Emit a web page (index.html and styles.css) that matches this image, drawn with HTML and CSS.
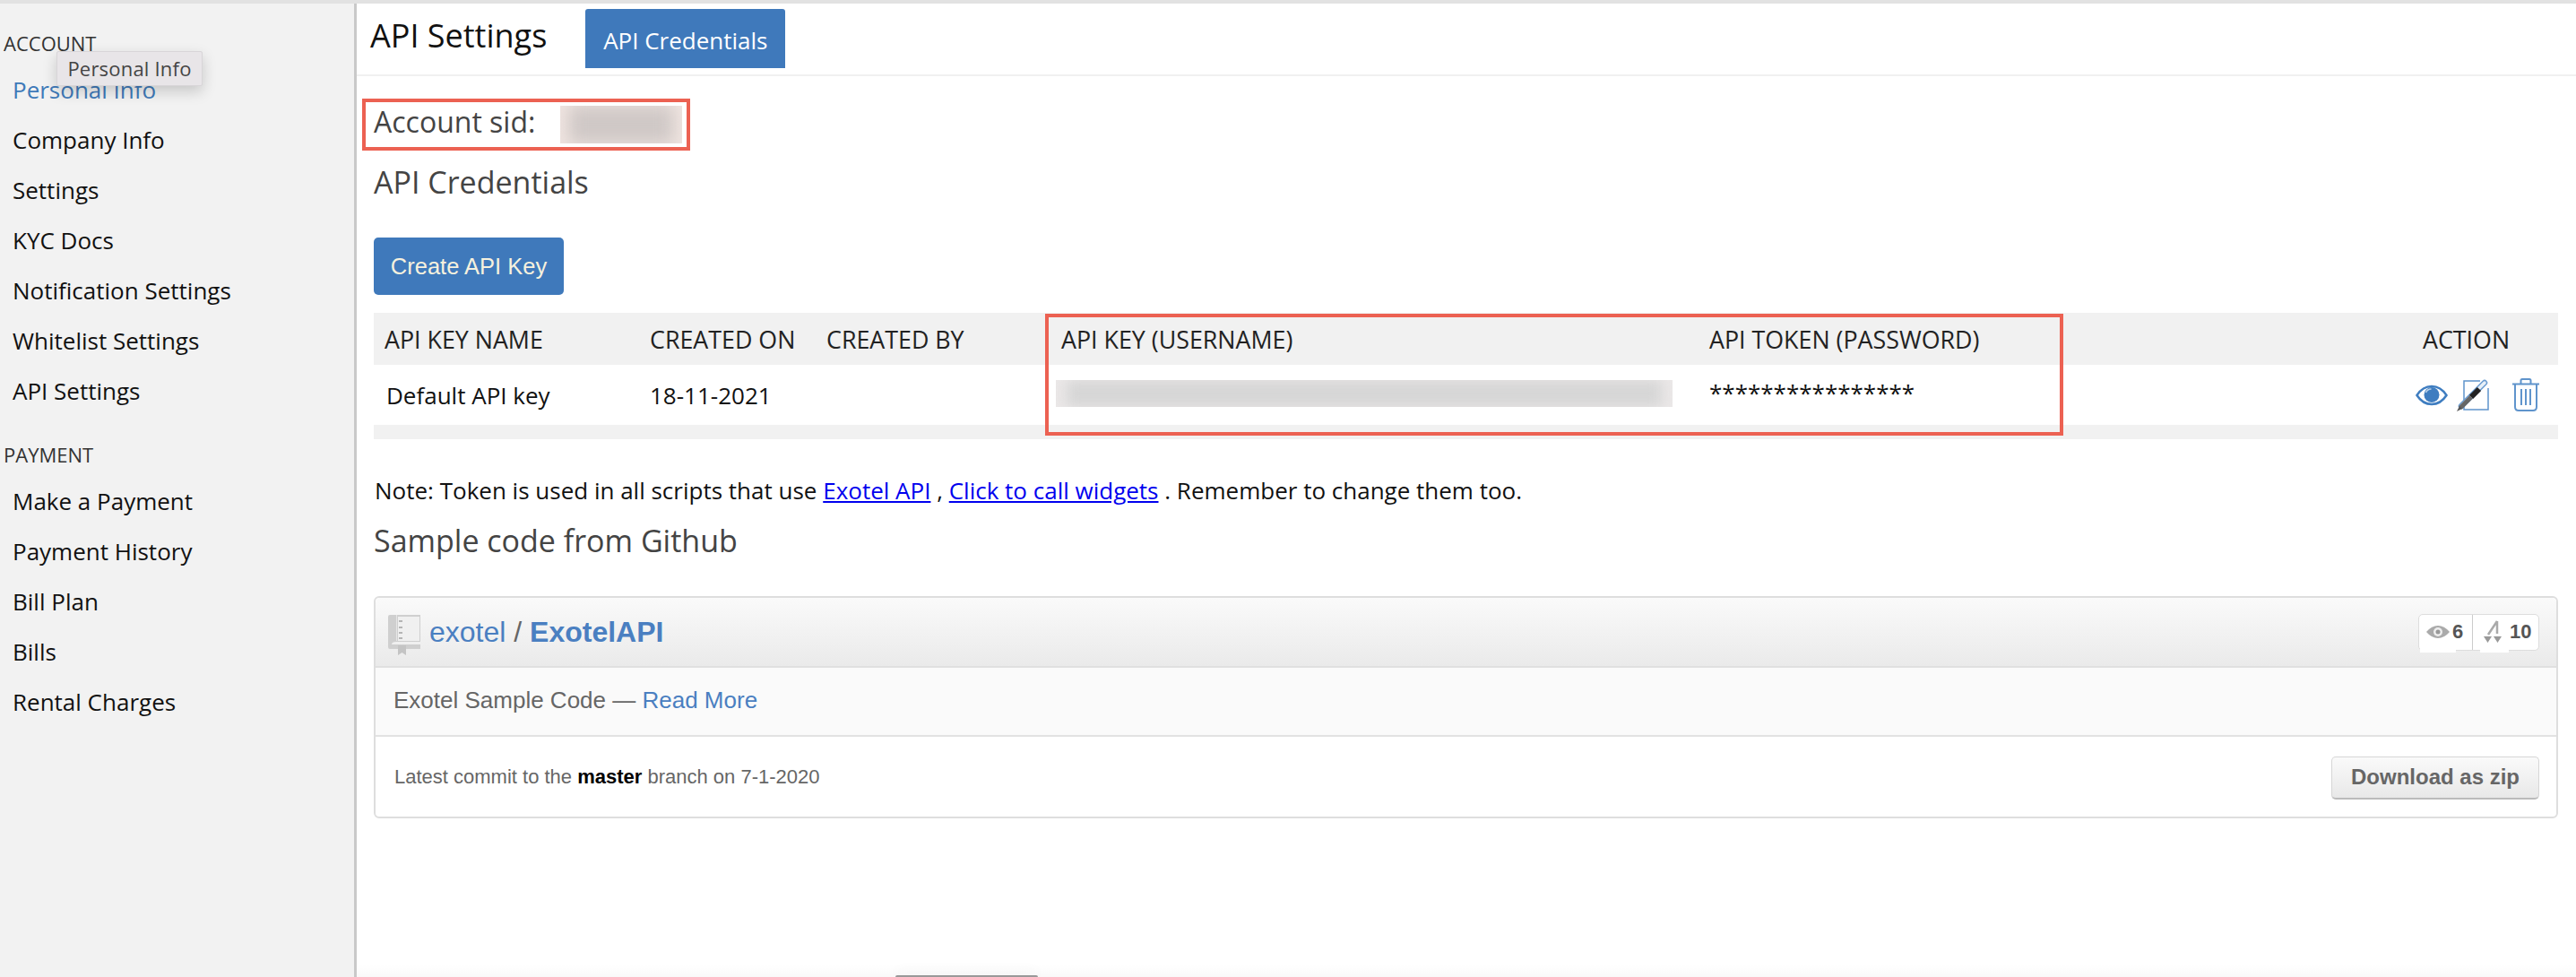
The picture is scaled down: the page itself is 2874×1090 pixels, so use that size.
FILE: index.html
```html
<!DOCTYPE html>
<html lang="en">
<head>
  <meta charset="UTF-8">
  <title>API Settings</title>
  <link rel="stylesheet" href="styles.css">
</head>
<body>
  <div class="page">
    <aside class="sidebar">
      <div class="nav-label first">ACCOUNT</div>
      <a class="nav-item active">Personal Info</a>
      <a class="nav-item">Company Info</a>
      <a class="nav-item">Settings</a>
      <a class="nav-item">KYC Docs</a>
      <a class="nav-item">Notification Settings</a>
      <a class="nav-item">Whitelist Settings</a>
      <a class="nav-item">API Settings</a>
      <div class="nav-label">PAYMENT</div>
      <a class="nav-item">Make a Payment</a>
      <a class="nav-item">Payment History</a>
      <a class="nav-item">Bill Plan</a>
      <a class="nav-item">Bills</a>
      <a class="nav-item">Rental Charges</a>
      <div class="tooltip">Personal Info</div>
    </aside>

    <main class="main">
      <header class="top">
        <h1 class="title">API Settings</h1>
        <a class="tab">API Credentials</a>
      </header>

      <div class="content">
        <div class="sid-box">
          <span class="sid-label">Account sid:</span>
          <span class="blur sid-blur"><i></i></span>
        </div>
        <h2 class="heading cred-heading">API Credentials</h2>
        <button class="create-btn">Create API Key</button>

        <div class="table-wrap">
          <table class="keys">
            <colgroup>
              <col class="c-name"><col class="c-on"><col class="c-by"><col class="c-key"><col class="c-token"><col class="c-action">
            </colgroup>
            <thead>
              <tr>
                <th>API KEY NAME</th>
                <th>CREATED ON</th>
                <th>CREATED BY</th>
                <th>API KEY (USERNAME)</th>
                <th>API TOKEN (PASSWORD)</th>
                <th>ACTION</th>
              </tr>
            </thead>
            <tbody>
              <tr>
                <td class="name-cell">Default API key</td>
                <td>18-11-2021</td>
                <td></td>
                <td class="key-cell"><span class="blur key-blur"><i></i></span></td>
                <td class="token-cell">****************</td>
                <td class="action-cell">
                  <svg class="ic-eye" width="36" height="24" viewBox="0 0 36 24">
                    <path d="M1.5 12C6 5 11.500 2 18 2s12 3 16.500 10C30 19 24.500 22 18 22S6 19 1.500 12z" fill="none" stroke="#3f7dc0" stroke-width="2.500"/>
                    <circle cx="18" cy="11.500" r="8.500" fill="#3f7dc0"/>
                    <path d="M11.500 9c1-2.500 3.500-4 6-4" fill="none" stroke="#bcd3ea" stroke-width="1.500"/>
                  </svg>
                  <svg class="ic-edit" width="36" height="38" viewBox="0 0 36 38">
                    <path d="M26 3H8v32h27V11" fill="none" stroke="#5f94cc" stroke-width="1.500"/>
                    <path d="M5 31 31 5" stroke="#6a9bd0" stroke-width="6.500" stroke-linecap="round"/>
                    <path d="M5 31 31 5" stroke="#e8f0f8" stroke-width="3.500" stroke-linecap="round"/>
                    <path d="M25 12 16 21" stroke="#222" stroke-width="6"/>
                    <path d="M16 21 4 33" stroke="#666" stroke-width="5"/>
                    <path d="M3 31 0 37l6-3z" fill="#555"/>
                  </svg>
                  <svg class="ic-trash" width="32" height="37" viewBox="0 0 32 37">
                    <path d="M1 6.500h30M10.500 6V2.500q0-1.500 1.500-1.500h8q1.500 0 1.500 1.500V6M4 7v25q0 4 4 4h16q4 0 4-4V7M11 12v18M16 12v18M21 12v18" fill="none" stroke="#5f94cc" stroke-width="2"/>
                  </svg>
                </td>
              </tr>
            </tbody>
          </table>
          <div class="table-foot"></div>
          <div class="mark-box"></div>
        </div>

        <p class="note">Note: Token is used in all scripts that use <a href="#">Exotel API</a> , <a href="#">Click to call widgets</a> . Remember to change them too.</p>
        <h2 class="heading sample-heading">Sample code from Github</h2>

        <section class="repo">
          <div class="repo-head">
            <svg class="book" width="36" height="45" viewBox="0 0 36 45">
              <path d="M0 2q0-2 2-2h34v30H9q-5 0-5 3h32v5H2q-2 0-2-2z" fill="#cfcfcf"/>
              <path d="M9 0h1v29H9z" fill="#e6e6e6"/>
              <path d="M11 2h24v27H11z" fill="#f0f0f0"/>
              <path d="M12 6h4v2h-4zM12 13h4v2h-4zM12 19h4v2h-4zM12 25h4v2h-4z" fill="#b5b5b5"/>
              <path d="M11 34h9v11l-4.500-3-4.500 3z" fill="#c4c4c4"/>
            </svg>
            <div class="repo-name"><a>exotel</a> <span>/</span> <a class="strong">ExotelAPI</a></div>
            <div class="stats">
              <div class="stat watch">
                <svg width="28" height="16" viewBox="0 0 28 16">
                  <path d="M1 8q6-7 13-7t13 7q-6 7-13 7T1 8z" fill="#aaa"/>
                  <circle cx="14" cy="8" r="5" fill="#eee"/>
                  <circle cx="14" cy="8" r="2.500" fill="#999"/>
                </svg>
                <b>6</b>
              </div>
              <div class="stat fork">
                <svg width="20" height="26" viewBox="0 0 20 26">
                  <path d="M15 1 5 16M15 1v14" fill="none" stroke="#aaa" stroke-width="2.500"/>
                  <path d="M0 18h9l-4.500 7zM11 18h9l-4.500 7z" fill="#999"/>
                </svg>
                <b>10</b>
              </div>
              <span class="patch patch-a"></span>
              <span class="patch patch-b"></span>
            </div>
          </div>
          <div class="repo-desc">Exotel Sample Code — <a>Read More</a></div>
          <div class="repo-foot">
            <span>Latest commit to the <b>master</b> branch on 7-1-2020</span>
            <button class="zip-btn">Download as zip</button>
          </div>
        </section>
      </div>
    </main>
  </div>
  <div class="bottom-fade"></div>
  <div class="dock-edge"></div>
</body>
</html>
```

FILE: styles.css
```css
html,
body {
  margin: 0;
  height: 1090px;
  overflow: hidden;
  background-color: #ffffff;
  font-family: "Open Sans", sans-serif;
  color: #111;
}
body {
  position: relative;
  border-top: 4px solid #e2e2e2;
  box-sizing: border-box;
}
.page {
  display: flex;
  height: 100%;
}

/* sidebar */
.sidebar {
  position: relative;
  flex: 0 0 395px;
  background-color: #f2f2f2;
  border-right: 3px solid #c9c9c9;
  padding-top: 22px;
}
.nav-label {
  height: 44px;
  line-height: 44px;
  margin: 21px 0 2px 4px;
  font-size: 22px;
  color: #333;
}
.nav-label.first {
  margin-bottom: 2px;
  margin-top: 0;
}
.nav-item {
  display: block;
  height: 56px;
  line-height: 56px;
  padding-left: 14px;
  font-size: 26px;
  color: #111;
}
.nav-item.active {
  color: #3f7ab9;
}
.tooltip {
  position: absolute;
  left: 63px;
  top: 53px;
  width: 163px;
  height: 39px;
  line-height: 36px;
  box-sizing: border-box;
  text-align: center;
  font-size: 22px;
  letter-spacing: 0.2px;
  color: #444;
  background-color: #e8e5e8;
  border: 1px solid #d8d5d8;
  border-radius: 2px;
  box-shadow: 0 6px 16px rgba(0, 0, 0, 0.18);
}

/* top bar */
.main {
  flex: 1;
  min-width: 0;
}
.top {
  display: flex;
  align-items: flex-start;
  height: 79px;
  border-bottom: 2px solid #f0f0f0;
  padding-left: 15px;
}
.title {
  margin: 9px 0 0;
  font-size: 36px;
  line-height: 54px;
  font-weight: 400;
  color: #111;
}
.tab {
  margin: 6px 0 0 43px;
  width: 223px;
  height: 66px;
  line-height: 70px;
  text-align: center;
  font-size: 26px;
  color: #fff;
  background-color: #3f79bb;
  border-radius: 3px 3px 0 0;
}

/* content */
.content {
  padding: 25px 20px 0 19px;
}
.sid-box {
  display: flex;
  align-items: center;
  width: 366px;
  height: 58px;
  box-sizing: border-box;
  margin-left: -13px;
  padding-left: 9px;
  border: 4px solid #ec6152;
}
.sid-label {
  width: 208px;
  margin-bottom: 6px;
  font-size: 32px;
  line-height: 44px;
  color: #444;
}
.blur {
  display: block;
  overflow: hidden;
  background-color: #efe4e0;
}
.blur i {
  display: block;
  height: 100%;
  background-color: #cfc8c6;
  filter: blur(9px);
}
.sid-blur {
  width: 136px;
  height: 42px;
}
.sid-blur i {
  margin: 0 10px;
}
.heading {
  margin: 0;
  font-weight: 400;
  font-size: 34px;
  line-height: 44px;
  color: #444;
}
.cred-heading {
  margin-top: 13px;
}
.create-btn {
  display: block;
  margin-top: 40px;
  width: 212px;
  height: 64px;
  padding: 0;
  border: 0;
  border-radius: 5px;
  background-color: #3f79bb;
  color: #f6f1de;
  font-family: "Liberation Sans", sans-serif;
  font-size: 25.500px;
}

/* table */
.table-wrap {
  position: relative;
  margin-top: 20px;
  width: 2437px;
}
.keys {
  width: 100%;
  table-layout: fixed;
  border-collapse: collapse;
  font-size: 26px;
}
.c-name { width: 296px; }
.c-on { width: 197px; }
.c-by { width: 262px; }
.c-key { width: 723px; }
.c-token { width: 796px; }
.c-action { width: 163px; }
.keys th {
  height: 58px;
  padding: 0 0 0 12px;
  text-align: left;
  font-size: 26.800px;
  font-weight: 400;
  color: #222;
  background-color: #f1f1f1;
}
.keys td {
  height: 67px;
  padding: 0 0 0 12px;
  color: #111;
  background-color: #fff;
}
.keys .name-cell {
  padding-left: 14px;
}
.keys .key-cell {
  padding-left: 6px;
}
.keys .token-cell {
  height: 62px;
  padding-bottom: 5px;
}
.key-blur {
  width: 688px;
  height: 30px;
  background-color: #ebe8e8;
  margin-bottom: 3px;
}
.key-blur i {
  margin: 0 12px;
  background-color: #d6d6d6;
  filter: blur(7px);
}
.keys .action-cell {
  white-space: nowrap;
  font-size: 0;
}
.action-cell svg {
  vertical-align: middle;
}
.ic-eye { margin-left: -8px; }
.ic-edit { margin-left: 10px; }
.ic-trash { margin-left: 25px; }
.table-foot {
  height: 16px;
  background-color: #f1f1f1;
}
.mark-box {
  position: absolute;
  left: 749px;
  top: 1px;
  width: 1136px;
  height: 136px;
  box-sizing: border-box;
  border: 4px solid #ec6152;
}
.note {
  margin: 40px 0 0 1px;
  font-size: 26px;
  line-height: 34px;
  color: #111;
}
.note a {
  color: #0000ee;
  text-decoration: underline;
}
.sample-heading {
  margin-top: 17px;
}

/* github widget */
.repo {
  margin-top: 40px;
  width: 2437px;
  box-sizing: border-box;
  border: 2px solid #dedede;
  border-radius: 6px;
  font-family: "Liberation Sans", sans-serif;
  color: #666;
}
.repo-head {
  display: flex;
  align-items: center;
  height: 76px;
  padding: 0 19px 0 14px;
  background: linear-gradient(#fafafa, #eaeaea);
  border-bottom: 2px solid #e0e0e0;
  border-radius: 5px 5px 0 0;
}
.book {
  margin-top: 6px;
}
.repo-name {
  margin-left: 10px;
  font-size: 32px;
  color: #666;
}
.repo-name a,
.repo-desc a {
  color: #4a7fc1;
}
.repo-name .strong {
  font-weight: 700;
}
.stats {
  position: relative;
  display: flex;
  margin-left: auto;
  height: 41px;
  box-sizing: border-box;
  background-color: #fff;
  border: 1px solid #ddd;
  border-radius: 5px;
  color: #555;
  font-size: 22px;
}
.stat {
  display: flex;
  align-items: center;
}
.stat b {
  position: relative;
  z-index: 1;
}
.watch {
  width: 60px;
  gap: 2px;
  padding-left: 7px;
  box-sizing: border-box;
  border-right: 1px solid #ccc;
}
.fork {
  width: 73px;
  gap: 9px;
  padding-left: 12px;
  box-sizing: border-box;
}
.patch {
  position: absolute;
  top: 36px;
  height: 6px;
  background-color: #fff;
}
.patch-a {
  left: 1px;
  width: 40px;
}
.patch-b {
  left: 68px;
  width: 32px;
}
.repo-desc {
  height: 75px;
  line-height: 73px;
  padding-left: 20px;
  font-size: 26px;
  background-color: #fafafa;
  border-bottom: 2px solid #e2e2e2;
}
.repo-foot {
  display: flex;
  align-items: center;
  justify-content: space-between;
  height: 89px;
  padding: 0 19px 0 21px;
  font-size: 22px;
}
.repo-foot b {
  color: #000;
}
.zip-btn {
  width: 232px;
  height: 48px;
  padding: 0;
  margin-top: 2px;
  border: 1px solid #d6d6d6;
  border-bottom: 2px solid #bbb;
  border-radius: 5px;
  background: linear-gradient(#fafafa, #e8e8e8);
  color: #666;
  font-family: "Liberation Sans", sans-serif;
  font-size: 24px;
  font-weight: 700;
}

/* the window's bottom edge */
.bottom-fade {
  position: absolute;
  left: 398px;
  right: 0;
  bottom: 0;
  height: 14px;
  background: linear-gradient(rgba(0, 0, 0, 0), rgba(0, 0, 0, 0.025));
}
.dock-edge {
  position: absolute;
  left: 999px;
  bottom: 0;
  width: 159px;
  height: 2px;
  background-color: #999;
  border-radius: 2px 2px 0 0;
  box-shadow: 0 -4px 14px rgba(0, 0, 0, 0.1);
}
```
